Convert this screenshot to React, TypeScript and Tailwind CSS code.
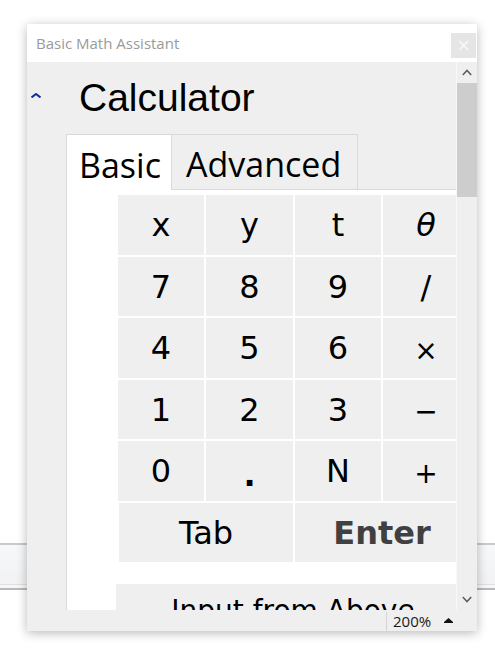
import React from "react";

const keyFont = { fontFamily: '"DejaVu Sans", sans-serif' } as const;

function Key({ children, className = "text-black" }: { children: React.ReactNode; className?: string }) {
  return (
    <div className={"bg-[#efefef] flex items-center justify-center text-[32px] leading-none " + className}>
      {children}
    </div>
  );
}

export default function App() {
  return (
    <div className="relative w-[495px] h-[652px] bg-white overflow-hidden">
      {/* desktop band behind the window */}
      <div className="absolute left-0 right-0 top-[543px] flex flex-col">
        <div className="h-[2px] bg-[#c9c9c9]" />
        <div className="h-[39px] bg-gradient-to-b from-[#f7f8f9] to-[#f1f2f4]" />
        <div className="h-[1px] bg-[#e0e0e0]" />
        <div className="h-[3px] bg-[#f7f7f7]" />
        <div className="h-[2px] bg-[#b9b9b9]" />
      </div>

      {/* window */}
      <div className="absolute left-[27px] top-[24px] w-[450px] h-[607px] flex flex-col bg-[#efefef] shadow-[0_2px_10px_rgba(0,0,0,0.28)]">
        {/* title bar */}
        <div className="h-[38px] bg-white flex justify-between items-start shrink-0">
          <span
            className="ml-[9px] mt-[9px] text-[15px] leading-[20px] text-[#9a9a9a]"
            style={{ fontFamily: '"Open Sans", sans-serif' }}
          >
            Basic Math Assistant
          </span>
          <div className="mt-[9px] mr-[1px] w-[25px] h-[25px] bg-[#e5e5e5] flex items-center justify-center text-[#f8f8f8] text-[17px] leading-none" style={{ fontFamily: '"DejaVu Sans", sans-serif' }}>
            ×
          </div>
        </div>

        {/* body */}
        <div className="h-[548px] flex shrink-0">
          <div className="w-[429px] h-full overflow-hidden bg-[#efefef]">
            <div className="pt-[16px]">
              <div className="flex items-center h-[39px]">
                <div className="w-[52px] pl-[4px] -mt-[5px] flex">
                  <svg width="10" height="5" viewBox="0 0 10 5">
                    <polyline points="0.5,4.5 5,1 9.5,4.5" fill="none" stroke="#0b32a3" strokeWidth="2" />
                  </svg>
                </div>
                <span
                  className="text-[39px] leading-[39px] text-black"
                  style={{ fontFamily: '"Liberation Sans", Arial, sans-serif' }}
                >
                  Calculator
                </span>
              </div>

              {/* tabs */}
              <div className="mt-[17px] ml-[39px] flex h-[56px]" style={{ fontFamily: '"Open Sans", sans-serif' }}>
                <div className="w-[106px] h-[56px] border-l border-t border-r border-[#d9d9d9] bg-white pl-[12px] pt-[13px] text-[34px] leading-[34px] text-black">
                  Basic
                </div>
                <div className="w-[186px] h-[56px] border-t border-r border-b border-[#d9d9d9] bg-[#efefef] pl-[14px] pt-[12px] text-[34px] leading-[34px] text-black">
                  Advanced
                </div>
                <div className="flex-1 border-b border-[#d9d9d9]" />
              </div>

              {/* panel */}
              <div className="ml-[39px] w-[420px] border-l border-[#d9d9d9] bg-white pt-[5px] pl-[51px] pb-[40px]" style={keyFont}>
                <div className="grid grid-cols-[86px_87px_86px_86px] grid-rows-[60px_59px_60px_59px_60px_59px] gap-[2px]">
                  <Key>x</Key>
                  <Key>y</Key>
                  <Key>t</Key>
                  <Key><span className="italic" style={{ fontFamily: '"DejaVu Sans", sans-serif' }}>θ</span></Key>
                  <Key>7</Key>
                  <Key>8</Key>
                  <Key>9</Key>
                  <Key>/</Key>
                  <Key>4</Key>
                  <Key>5</Key>
                  <Key>6</Key>
                  <Key><span className="translate-y-[3px] text-[28px]">×</span></Key>
                  <Key>1</Key>
                  <Key>2</Key>
                  <Key>3</Key>
                  <Key><span className="translate-y-[2px] text-[28px]">−</span></Key>
                  <Key>0</Key>
                  <Key><span className="translate-y-[4px] font-bold">.</span></Key>
                  <Key>N</Key>
                  <Key><span className="translate-y-[3px] text-[28px]">+</span></Key>
                  <Key className="col-span-2 ml-[1px] text-black">Tab</Key>
                  <Key className="col-span-2 font-bold text-[#404040]">Enter</Key>
                </div>
                <div className="mt-[22px] -ml-[2px] w-[354px] h-[54px] bg-[#efefef] flex items-center justify-center text-[28px] leading-none text-black">
                  Input from Above
                </div>
              </div>
            </div>
          </div>

          {/* scrollbar */}
          <div className="w-[21px] h-full border-l border-[#f8f8f8] bg-[#efefef] flex flex-col">
            <div className="h-[21px] flex items-center justify-center">
              <svg width="10" height="7" viewBox="0 0 10 7">
                <polyline points="0.8,6 5,1.5 9.2,6" fill="none" stroke="#5f5f5f" strokeWidth="1.6" />
              </svg>
            </div>
            <div className="h-[114px] bg-[#cdcdcd]" />
            <div className="flex-1" />
            <div className="h-[21px] flex items-center justify-center">
              <svg width="10" height="7" viewBox="0 0 10 7">
                <polyline points="0.8,1 5,5.5 9.2,1" fill="none" stroke="#5f5f5f" strokeWidth="1.6" />
              </svg>
            </div>
          </div>
        </div>

        {/* status bar */}
        <div className="h-[21px] flex shrink-0" style={{ fontFamily: '"Open Sans", sans-serif' }}>
          <div className="w-[359px]" />
          <div className="w-px mt-[2px] bg-[#d4d4d4]" />
          <span className="ml-[6px] pt-[1px] text-[15px] leading-[21px] text-[#1a1a1a]">200%</span>
          <div className="ml-[13px] pt-[8px]">
            <svg width="9" height="5" viewBox="0 0 9 5">
              <polygon points="4.5,0 9,4 0,4" fill="#111" />
              <rect x="0" y="4" width="9" height="1" fill="#111" />
            </svg>
          </div>
        </div>
      </div>
    </div>
  );
}
